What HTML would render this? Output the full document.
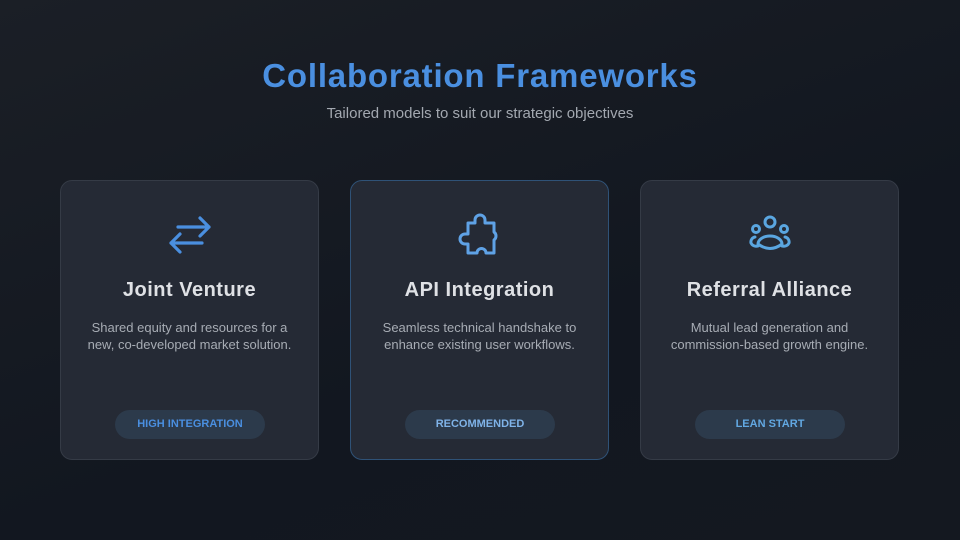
<!DOCTYPE html>
<html><head><style>
*{margin:0;padding:0;box-sizing:border-box}
body{width:960px;height:540px;overflow:hidden;background:linear-gradient(160deg,#1b1f26 0%,#121720 60%,#141820 100%);font-family:"Liberation Sans",sans-serif;position:relative}
h1{position:absolute;top:57px;left:0;width:960px;text-align:center;color:#4a8fe0;font-size:33px;font-weight:bold;letter-spacing:0.8px}
.sub{position:absolute;top:105px;left:0;width:960px;text-align:center;color:#a3a8b0;font-size:15px}
.card{position:absolute;top:180px;width:259px;height:280px;border-radius:12px;background:#252a35;border:1px solid #353b46}
.card.rec{border-color:#2f5277}
.icon{position:absolute;left:107px;width:44px;height:44px;top:32px}
.card h2{position:absolute;top:98px;width:100%;text-align:center;color:#dfe1e5;font-size:20px;font-weight:bold;letter-spacing:0.5px}
.card p{position:absolute;top:138px;width:100%;text-align:center;color:#a7acb4;font-size:13px;line-height:17px}
.pill{position:absolute;top:229px;left:54px;width:150px;height:29px;border-radius:15px;background:#2c3a4b;text-align:center;line-height:29px;font-size:11px;font-weight:bold;color:#6aa5e0}
</style></head><body>
<h1>Collaboration Frameworks</h1>
<div class="sub">Tailored models to suit our strategic objectives</div>

<div class="card" style="left:60px">
<svg class="icon" viewBox="0 0 44 44" fill="none" stroke="#4a8fe0" stroke-width="3.2" stroke-linecap="round" stroke-linejoin="round"><path d="M10 14H41M32 5L41 14L32 23M34 30H3M12 21L3 30L12 39"/></svg>
<h2>Joint Venture</h2>
<p>Shared equity and resources for a<br>new, co-developed market solution.</p>
<div class="pill" style="color:#4a8fe0">HIGH INTEGRATION</div>
</div>

<div class="card rec" style="left:350px">
<svg class="icon" viewBox="0 0 44 44" fill="none" stroke="#5fa2e6" stroke-width="3" stroke-linejoin="round"><path d="M10 10H17V7a5 5 0 0 1 10 0V10H36V19a5 5 0 0 1 0 8V40H28a4.5 4.5 0 0 0-9 0H10V31H7a5 5 0 0 1 0-10H10Z"/></svg>
<h2>API Integration</h2>
<p>Seamless technical handshake to<br>enhance existing user workflows.</p>
<div class="pill" style="color:#7fb3e8">RECOMMENDED</div>
</div>

<div class="card" style="left:640px">
<svg class="icon" viewBox="0 0 44 44" fill="none" stroke="#5aa6e0" stroke-width="3" stroke-linecap="round"><circle cx="22" cy="9" r="5"/><circle cx="8" cy="16" r="3.5"/><circle cx="36" cy="16" r="3.5"/><path d="M10 31a12 8 0 0 1 24 0Q22 40 10 31Z"/><path d="M7 24a5 5 0 0 0-4 6Q5 34 10 33M37 24a5 5 0 0 1 4 6Q39 34 34 33"/></svg>
<h2>Referral Alliance</h2>
<p>Mutual lead generation and<br>commission-based growth engine.</p>
<div class="pill" style="color:#62a8e2">LEAN START</div>
</div>
</body></html>
